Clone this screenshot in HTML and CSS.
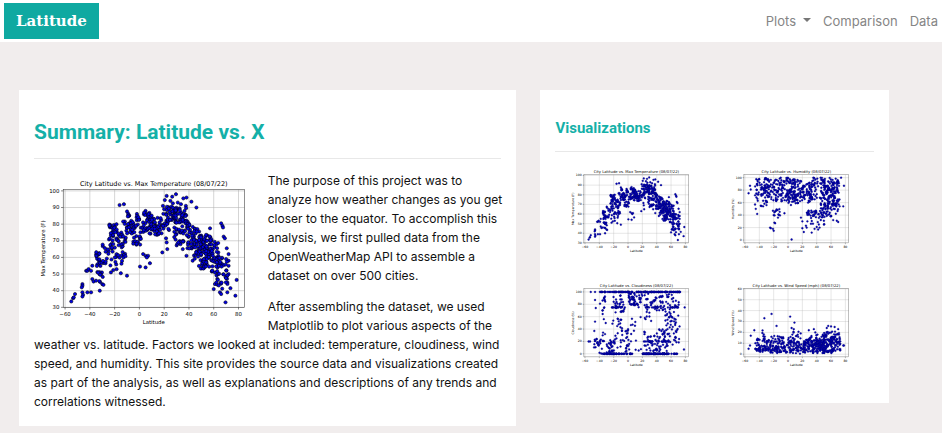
FILE: index.html
```html
<!DOCTYPE html>
<html lang="en">
<head>
<meta charset="utf-8">
<meta name="viewport" content="width=device-width, initial-scale=1">
<title>Latitude</title>
<link rel="stylesheet" href="styles.css">
</head>
<body>
<header class="navbar">
  <a class="brand" href="#">Latitude</a>
  <nav class="nav-links">
    <button class="nav-link dropdown" type="button">Plots</button>
    <a class="nav-link" href="#">Comparison</a>
    <a class="nav-link" href="#">Data</a>
  </nav>
</header>
<main class="layout">
  <section class="card">
    <h1 class="title">Summary: Latitude vs. X</h1>
    <hr class="rule">
    <div class="article">
      <svg class="plot figure" data-plot="temperature" viewBox="0 0 432 288"></svg>
      <p>The purpose of this project was to analyze how weather changes as you get closer to the equator. To accomplish this analysis, we first pulled data from the OpenWeatherMap API to assemble a dataset on over 500 cities.</p>
      <p>After assembling the dataset, we used Matplotlib to plot various aspects of the weather vs. latitude. Factors we looked at included: temperature, cloudiness, wind speed, and humidity. This site provides the source data and visualizations created as part of the analysis, as well as explanations and descriptions of any trends and correlations witnessed.</p>
    </div>
  </section>
  <aside class="card side">
    <h2 class="subtitle">Visualizations</h2>
    <hr class="rule">
    <div class="thumbs">
      <a class="thumb" href="#"><svg class="plot" data-plot="temperature" viewBox="0 0 432 288"></svg></a>
      <a class="thumb" href="#"><svg class="plot" data-plot="humidity" viewBox="0 0 432 288"></svg></a>
      <a class="thumb" href="#"><svg class="plot" data-plot="cloudiness" viewBox="0 0 432 288"></svg></a>
      <a class="thumb" href="#"><svg class="plot" data-plot="wind" viewBox="0 0 432 288"></svg></a>
    </div>
  </aside>
</main>
<script src="plots.js"></script>
</body>
</html>
```
FILE: styles.css
```css
* { box-sizing: border-box; }

body {
  margin: 0;
  background: #f1eded;
  color: #111;
  font-family: Inter, "Liberation Sans", sans-serif;
  font-size: 12px;
  line-height: 19px;
}

.navbar {
  display: flex;
  align-items: center;
  justify-content: space-between;
  padding: 3px 4px;
  background: #fff;
}

.brand {
  padding: 0 12px;
  background: #0fa9a1;
  color: #fff;
  font: bold 15px/36px "DejaVu Serif", serif;
  text-decoration: none;
}

.nav-links {
  display: flex;
  align-items: center;
  gap: 12px;
}

.nav-link {
  padding: 0;
  border: 0;
  background: none;
  color: #858585;
  font: 13px/20px Inter, sans-serif;
  text-decoration: none;
}

.dropdown::after {
  content: "";
  display: inline-block;
  margin-left: 7px;
  vertical-align: 4px;
  border: 4px solid transparent;
  border-top-color: #777;
  border-bottom: 0;
}

.layout {
  display: grid;
  grid-template-columns: minmax(0, 498fr) minmax(0, 349fr);
  align-items: start;
  gap: 24px;
  padding: 48px 53px 6px 19px;
}

.card {
  padding: 28px 15px 15px;
  background: #fff;
}

.title,
.subtitle {
  margin: 0;
  color: #14b0a8;
  font-family: Roboto, sans-serif;
  font-weight: bold;
}

.title { font-size: 21px; line-height: 28px; }
.subtitle { font-size: 15px; line-height: 21px; }

.rule {
  height: 1px;
  margin: 12px 0;
  border: 0;
  background: #e8e8e8;
}

.article p { margin: 0 -4px 12px 0; }
.article p:last-child { margin-bottom: 0; }

.figure {
  float: left;
  width: 50%;
}

.plot {
  display: block;
  font-family: "DejaVu Sans", sans-serif;
  font-size: 10px;
}

.side { padding-bottom: 35px; }

.thumbs {
  display: grid;
  grid-template-columns: 1fr 1fr;
  row-gap: 24px;
}

.thumb { padding: 0 12px; }
.thumb .plot { width: 100%; }

.frame { fill: none; stroke: #333; stroke-width: 1; }
.grid { stroke: #b0b0b0; stroke-width: 1; }
.tick { stroke: #222; stroke-width: 1; }
.dot { fill: #0000e8; stroke: #000; stroke-width: 1; }
.thumb .dot { fill: #0000bf; stroke: #000060; }
.plot-title { font-size: 12px; }
```
FILE: plots.js
```javascript
// Each cluster is [latFrom, latTo, count, valueFrom, valueTo].
const plots = {
  temperature: {
    title: "City Latitude vs. Max Temperature (08/07/22)", label: "Max Temperature (F)",
    min: 30, max: 100.7, ticks: [30, 40, 50, 60, 70, 80, 90, 100],
    points: [[-55,33.5],[-53.5,35.5],[-53,36],[-52,38],[-46,44],[-46,43],[-46.5,42],[-46,39],[-45.5,37.5],[-46,36.5],[-42,39],[-39,39],[-43,52],[-42,52],[-41,53],[-39,52],[-38,55],[-32,40],[-30,44],[-29,43.5],[-38,47],[-37,45.5],[-35,46],[-16,91.5],[-12.5,92],[-10,49],[-15,50.5],[-23,51],[0.5,54.5],[5,54],[8.5,56.5],[3,62],[5,61],[7,61],[6,60],[18.5,63],[22.5,65],[22,69],[21.5,71.5],[29.5,98],[22,97],[26.5,96.5],[35.5,95.5],[38,96],[20.5,94.5],[42,93.5],[31,93],[25,94],[27,92.5],[33.5,92],[37.5,91],[46,90],[19,91],[20,89],[66,80.5],[67,79],[67.5,78],[57,77.5],[68,72.5],[69,71.5],[70.5,65.5],[72,62],[70,59],[72,58],[69.5,33],[77.5,37],[78.5,46.5],[73.5,41.5],[71,39],[71,45],[72,50],[65,39],[66,38],[60,41],[61,44],[35,65],[38,61],[43,58]],
    clusters: [[-35,-32,16,54,64],[-35,-29,16,45,58],[-30,-24,10,55,68],[-25,-18,34,65,80],[-24,-18,10,52,64],[-17,-10,24,66,82],[-18,-11,10,54,64],[-10,-2,30,74,88],[-5,2,24,67,85],[2,10,36,75,88],[8,18,36,73,84],[17,24,18,76,87],[22,30,32,81,91],[28,34,18,67,79],[28,38,34,80,90],[34,40,24,68,86],[38,45,34,65,83],[44,50,32,58,78],[48,55,42,53,74],[52,60,44,53,74],[58,64,28,47,70],[62,67,26,41,60],[66,72,16,44,58]]
  },
  humidity: {
    title: "City Latitude vs. Humidity (08/07/22)", label: "Humidity (%)",
    min: -4.5, max: 104.5, ticks: [0, 20, 40, 60, 80, 100],
    points: [[5,1],[-55,75],[-53,87],[-52,81],[-43,42],[-45,50],[-46,57],[-38,55],[-30,56],[-21,47],[-20,40],[-19,28],[-18,27],[-25,20],[-24,19],[-21,18],[-20,15],[-14,36],[-5,43],[-16,49],[18,36],[20,30],[20,19],[22,13],[25,23],[26,20],[27,30],[33,12],[37,18],[42,17],[40,21],[43,25],[44,20],[50,25],[50,31],[63,32],[68,31],[70,29],[78,87],[77,54],[72,54],[74,100]],
    clusters: [[-46,-36,28,60,99],[-37,-28,40,54,100],[-28,-18,36,62,98],[-18,-8,40,62,100],[-8,2,42,60,100],[2,10,40,65,100],[8,20,40,62,98],[0,14,18,56,72],[20,34,52,60,92],[30,42,36,65,100],[44,52,40,55,100],[50,64,80,52,100],[62,72,52,56,100],[26,44,26,38,48],[44,54,22,36,52],[54,70,24,38,60],[-24,-10,10,38,50],[30,52,10,25,38]]
  },
  cloudiness: {
    title: "City Latitude vs. Cloudiness (08/07/22)", label: "Cloudiness (%)",
    min: -5, max: 105, ticks: [0, 20, 40, 60, 80, 100],
    points: [[-55,20],[-53,20],[-52,100],[-46,100],[-46,87],[-45,74],[-46,52],[-47,37],[-39,81],[78,7],[79,75]],
    clusters: [[-40,-10,35,100,100],[-10,22,40,100,100],[22,73,80,100,100],[-36,-10,44,0,0],[-10,6,16,0,0],[20,56,85,0,0],[56,72,9,0,0],[-48,-35,22,0,25],[-36,-31,20,20,98],[-30,-18,28,2,22],[-22,-5,28,65,95],[-22,-6,24,10,65],[-6,2,20,3,40],[0,10,34,78,99],[8,20,20,75,99],[4,22,13,5,60],[22,34,20,50,98],[22,40,26,3,36],[34,50,28,70,96],[38,56,38,4,40],[50,60,38,18,97],[58,72,42,14,96],[-24,-4,14,75,75],[25,72,24,75,75],[22,56,16,20,20]]
  },
  wind: {
    title: "City Latitude vs. Wind Speed (mph) (08/07/22)", label: "Wind Speed (%)",
    min: -2.5, max: 60, ticks: [0, 10, 20, 30, 40, 50, 60],
    points: [[-55,5],[-53,8],[-52,17],[-47,22],[-33,33],[-23,37],[-16,26],[3,34.5],[9,29],[5,24],[8,23],[6,18],[29,22],[36,23],[38,20],[54,24],[56,26],[60,25.5],[65,25],[70,23],[71,18],[78,8],[77,8]],
    clusters: [[-46,-35,28,2,11],[-46,-35,6,11,15],[-36,-24,40,3,14],[-36,-32,8,13,22],[-25,-10,48,1,12],[-24,-6,18,11,18],[-10,8,50,1,12],[0,18,20,11,21],[8,24,44,0,11],[22,36,52,1,13],[34,50,84,1,13],[48,62,72,1,14],[58,73,52,2,16],[26,50,26,11,18],[50,64,22,13,21],[64,73,16,10,22]]
  }
};

// Small seeded generator, so that the figures are the same on every load.
function generator(seed) {
  return () => {
    seed = (seed * 1664525 + 1013904223) >>> 0;
    return seed / 4294967296;
  };
}

function draw(svg) {
  const p = plots[svg.dataset.plot];
  const x = v => 54 + (v + 61.5) * 2.29;
  const y = v => 252 - (v - p.min) / (p.max - p.min) * 217.4;
  const random = generator(p.title.length * 97);
  const points = [...p.points];
  for (const [a, b, n, lo, hi] of p.clusters) {
    for (let i = 0; i < n; i++) points.push([a + random() * (b - a), lo + random() * (hi - lo)]);
  }
  let out = "";
  out += points.map(([a, b]) => `<circle class="dot" cx="${x(a).toFixed(1)}" cy="${y(b).toFixed(1)}" r="3"/>`).join("");
  let lines = "";
  for (let v = -60; v <= 80; v += 20) {
    lines += `<path class="grid" d="M${x(v)} 34.6V252"/>`;
    out += `<path class="tick" d="M${x(v)} 252v4"/><text x="${x(v)}" y="268" text-anchor="middle">${String(v).replace("-", "−")}</text>`;
  }
  for (const v of p.ticks) {
    lines += `<path class="grid" d="M54 ${y(v)}H388.8"/>`;
    out += `<path class="tick" d="M54 ${y(v)}h-4"/><text x="47" y="${y(v) + 3}" text-anchor="end">${v}</text>`;
  }
  out += `<rect class="frame" x="54" y="34.6" width="334.8" height="217.4"/>`;
  out += `<text class="plot-title" x="221.4" y="28" text-anchor="middle">${p.title}</text>`;
  out += `<text x="221.4" y="282" text-anchor="middle">Latitude</text>`;
  out += `<text transform="translate(21 143.3) rotate(-90)" text-anchor="middle">${p.label}</text>`;
  svg.innerHTML = lines + out;
}

document.querySelectorAll(".plot").forEach(draw);
```
